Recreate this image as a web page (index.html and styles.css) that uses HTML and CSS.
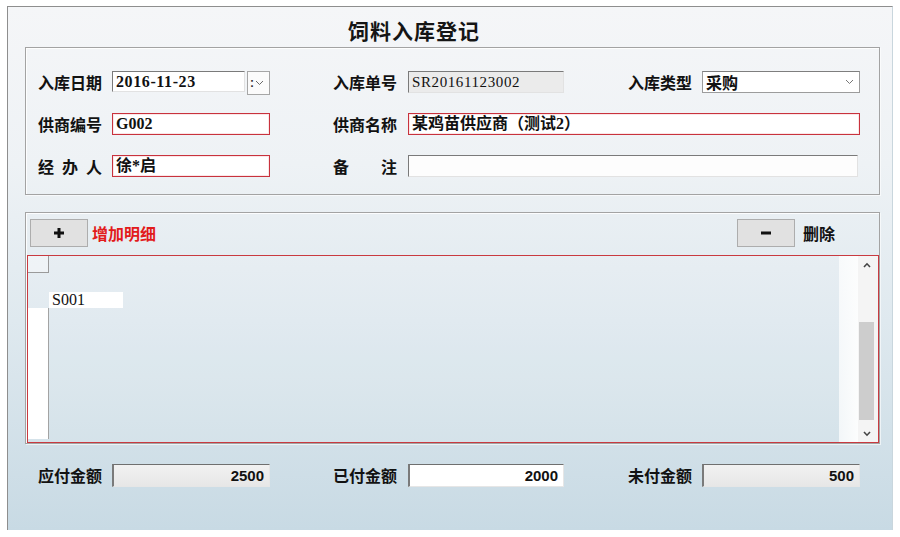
FILE: index.html
```html
<!DOCTYPE html>
<html lang="zh-CN">
<head>
<meta charset="utf-8">
<title>饲料入库登记</title>
<link rel="stylesheet" href="styles.css">
</head>
<body>
<div class="window">
  <div class="title">饲料入库登记</div>

  <div class="group group-head">
    <div class="form-grid">
      <div class="lbl c1">入库日期</div>
      <div class="c2 date-wrap">
        <div class="field sunken date">2016-11-23</div>
        <div class="date-btn"><span class="colon">:</span><svg width="9" height="6" viewBox="0 0 9 6"><polyline points="1,1 4.5,4.5 8,1" fill="none" stroke="#6a6a6a" stroke-width="1"/></svg></div>
      </div>
      <div class="lbl c4">入库单号</div>
      <div class="c5 field sunken readonly">SR20161123002</div>
      <div class="lbl c7">入库类型</div>
      <div class="c8 field select"><span>采购</span><svg width="9" height="6" viewBox="0 0 9 6"><polyline points="1,1 4.5,4.5 8,1" fill="none" stroke="#777" stroke-width="1"/></svg></div>

      <div class="lbl c1">供商编号</div>
      <div class="c2 field req">G002</div>
      <div class="lbl c4">供商名称</div>
      <div class="c5w field req">某鸡苗供应商（测试2）</div>

      <div class="lbl spaced c1"><span>经</span><span>办</span><span>人</span></div>
      <div class="c2 field req">徐*启</div>
      <div class="lbl spaced c4"><span>备</span><span>注</span></div>
      <div class="c5w field sunken memo"></div>
    </div>
  </div>

  <div class="group group-detail">
    <div class="toolbar">
      <div class="btn"><svg width="10" height="10" viewBox="0 0 10 10"><rect x="3.5" y="0" width="3" height="10" fill="#111"/><rect x="0" y="3.5" width="10" height="3" fill="#111"/></svg></div>
      <span class="add-label">增加明细</span>
      <span class="spacer"></span>
      <div class="btn"><svg width="10" height="4" viewBox="0 0 10 4"><rect x="0" y="0.5" width="10" height="3" fill="#111"/></svg></div>
      <span class="del-label">删除</span>
    </div>
    <div class="grid-box">
      <div class="rowhead">
        <div class="corner"></div>
        <div class="rh-gap"></div>
        <div class="rh-cell"></div>
        <div class="rh-fill"></div>
      </div>
      <div class="grid-main">
        <div class="cell">S001</div>
      </div>
      <div class="scroll-zone">
        <div class="sc-pad"></div>
        <div class="sc-bar">
          <div class="sc-arrow"><svg width="8" height="6" viewBox="0 0 8 6"><polyline points="1,5 4,1.8 7,5" fill="none" stroke="#444" stroke-width="1.6"/></svg></div>
          <div class="sc-rail"><div class="sc-thumb"></div></div>
          <div class="sc-arrow"><svg width="8" height="6" viewBox="0 0 8 6"><polyline points="1,1 4,4.2 7,1" fill="none" stroke="#444" stroke-width="1.6"/></svg></div>
        </div>
      </div>
    </div>
  </div>

  <div class="form-grid footer">
    <div class="lbl c1">应付金额</div>
    <div class="c2 field amount gray">2500</div>
    <div class="lbl c4">已付金额</div>
    <div class="c5 field amount white">2000</div>
    <div class="lbl c7">未付金额</div>
    <div class="c8 field amount gray">500</div>
  </div>
</div>
</body>
</html>
```

FILE: styles.css
```css
* { box-sizing: border-box; }

body {
  margin: 0;
  background: #ffffff;
  font-family: "Noto Sans CJK SC", sans-serif;
  color: #111;
}

.window {
  margin: 6px 0 0 7px;
  width: 886px;
  height: 524px;
  border-top: 1px solid #8e8e8e;
  border-left: 1px solid #8e8e8e;
  border-right: 1px solid #c9d6dd;
  background: linear-gradient(to bottom, #f5f6f8 0%, #eef2f5 30%, #dfe9ef 60%, #c8dae4 100%);
}

.title {
  height: 40px;
  padding: 11px 0 0 340px;
  font-size: 21px;
  font-weight: 700;
  line-height: 24px;
  letter-spacing: 1px;
  color: #151515;
}

.group {
  margin-left: 17px;
  width: 855px;
  border: 1px solid #a3a3a3;
  box-shadow: inset 1px 1px 0 rgba(255,255,255,0.85), 1px 1px 0 rgba(255,255,255,0.6);
}

.group-head {
  height: 148px;
  padding: 23px 0 0 12px;
}

.form-grid {
  display: grid;
  grid-template-columns: 74px 158px 63px 75px 156px 64px 74px 158px;
  grid-auto-rows: 22px;
  row-gap: 20px;
}

.c1 { grid-column: 1; }
.c2 { grid-column: 2; }
.c4 { grid-column: 4; }
.c5 { grid-column: 5; }
.c5w { grid-column: 5 / 9; }
.c7 { grid-column: 7; }
.c8 { grid-column: 8; }

.lbl {
  font-size: 16px;
  font-weight: 700;
  line-height: 22px;
  white-space: nowrap;
  color: #121212;
}

.spaced {
  display: flex;
  justify-content: space-between;
  width: 64px;
}

.field {
  height: 22px;
  padding-left: 3px;
  background: #ffffff;
  font: 700 16px/20px "Liberation Serif", "Noto Sans CJK SC", serif;
  white-space: nowrap;
  overflow: hidden;
  color: #111;
}

.sunken {
  border-top: 1px solid #7a7a7a;
  border-left: 1px solid #7a7a7a;
  border-right: 1px solid #e2e2e2;
  border-bottom: 1px solid #e2e2e2;
}

.req {
  border: 1px solid #c8323d;
  box-shadow: inset 0 0 0 1px #fbe6e7;
}

.readonly {
  background: #ebebeb;
  font-weight: 400;
  font-size: 15px;
  letter-spacing: 0.6px;
  padding-left: 3px;
}

.memo {
  width: 450px;
  background: #fdfdfd;
}

.date-wrap {
  display: flex;
  gap: 2px;
}

.date {
  width: 133px;
  height: 21px;
  letter-spacing: 0.6px;
}

.date-btn {
  width: 23px;
  height: 24px;
  border: 1px solid #a6a6a6;
  background: #fbfbfb;
  display: flex;
  align-items: center;
  padding-left: 2px;
  gap: 1px;
}

.colon {
  font: 700 12px/12px "Liberation Sans", sans-serif;
  color: #333;
}

.select {
  display: flex;
  justify-content: space-between;
  align-items: center;
  border: 1px solid #9c9c9c;
  border-top-color: #7e7e7e;
  padding-right: 5px;
  font-family: "Noto Sans CJK SC", sans-serif;
  font-weight: 700;
  font-size: 16px;
}

/* detail group */
.group-detail {
  margin-top: 17px;
  height: 232px;
}

.toolbar {
  display: flex;
  align-items: center;
  height: 28px;
  margin: 6px 0 0 4px;
  padding-right: 44px;
}

.btn {
  width: 58px;
  height: 28px;
  background: #e1e1e1;
  border: 1px solid #adadad;
  display: flex;
  align-items: center;
  justify-content: center;
}

.add-label {
  margin-left: 4px;
  color: #e21b1b;
  font-size: 16px;
  font-weight: 700;
}

.spacer { flex: 1; }

.del-label {
  margin-left: 8px;
  font-size: 16px;
  font-weight: 700;
  color: #111;
}

.grid-box {
  margin: 8px 0 0 1px;
  width: 852px;
  height: 188px;
  border: 1px solid #c93a40;
  display: flex;
  background: rgba(255,255,255,0.08);
}

.rowhead {
  width: 21px;
  display: flex;
  flex-direction: column;
}

.corner {
  height: 17px;
  border-right: 1px solid #9a9a9a;
  border-bottom: 1px solid #9a9a9a;
  background: rgba(255,255,255,0.35);
}

.rh-gap { height: 19px; }
.rh-cell { height: 16px; }

.rh-fill {
  flex: 1;
  margin-bottom: 3px;
  background: #ffffff;
  border-right: 1px solid #a3a3a3;
}

.grid-main {
  flex: 1;
  padding-top: 36px;
}

.cell {
  width: 74px;
  height: 16px;
  padding-left: 3px;
  background: #ffffff;
  font: 400 16px/16px "Liberation Serif", serif;
  color: #111;
}

.scroll-zone {
  width: 39px;
  display: flex;
}

.sc-pad {
  width: 19px;
  background: linear-gradient(to right, rgba(255,255,255,0.7), #fcfdfd);
}

.sc-bar {
  width: 20px;
  display: flex;
  flex-direction: column;
  background: #f4f4f4;
}

.sc-arrow {
  height: 17px;
  display: flex;
  align-items: center;
  justify-content: center;
  padding-right: 2px;
}

.sc-rail {
  flex: 1;
  padding: 49px 4px 0 1px;
}

.sc-thumb {
  height: 98px;
  background: #cdcdcd;
}

/* footer amounts */
.footer {
  margin-top: 20px;
  padding-left: 30px;
  grid-auto-rows: 23px;
}

.amount {
  height: 23px;
  text-align: right;
  padding-right: 5px;
  font: 700 15px/21px "Liberation Sans", sans-serif;
  border-top: 1px solid #6f6f6f;
  border-left: 2px solid #7a7a7a;
  border-right: 1px solid #e6e6e6;
  border-bottom: 1px solid #e6e6e6;
}

.gray { background: linear-gradient(to bottom, #f1f1f1, #e7e7e7); }
.white { background: #ffffff; }
```
